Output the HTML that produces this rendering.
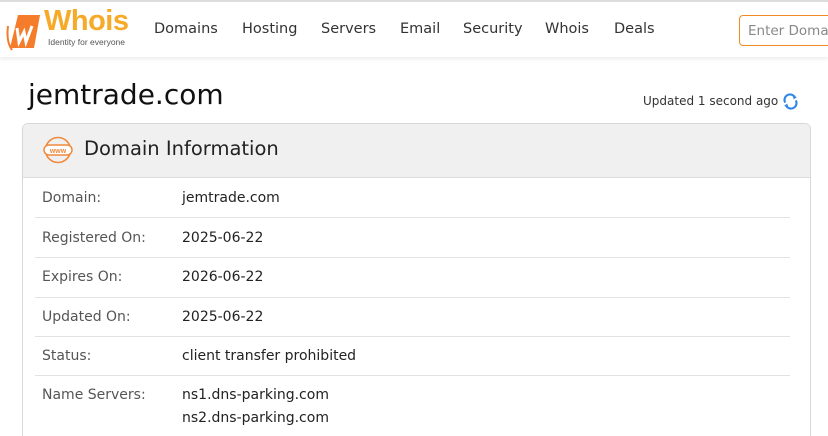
<!DOCTYPE html>
<html><head><meta charset="utf-8"><style>
*{margin:0;padding:0;box-sizing:border-box}
html,body{width:828px;height:436px;overflow:hidden}
body{background:#fff;font-family:"DejaVu Sans","Liberation Sans",sans-serif;color:#222;position:relative}
.top{position:absolute;left:0;top:0;width:828px;height:2px;background:#ddd}
.hdr{position:absolute;left:0;top:2px;width:828px;height:55px;background:#fff;box-shadow:0 2px 4px rgba(0,0,0,.08)}
.nav{position:absolute;top:19px;font-size:14.5px;color:#333}
.inp{position:absolute;left:739px;top:13px;width:100px;height:31px;border:1px solid #f08a24;border-radius:4px;font-size:13.5px;color:#888;padding:7px 8px;white-space:nowrap;overflow:hidden}
h1{position:absolute;left:28px;top:78px;font-size:28px;font-weight:normal;color:#111;font-family:"DejaVu Sans",sans-serif}
.upd{position:absolute;left:643px;top:94px;font-size:12px;color:#333}
.card{position:absolute;left:22px;top:123px;width:789px;height:330px;border:1px solid #d8d8d8;border-radius:6px;overflow:hidden;background:#fff}
.ch{height:54px;background:#f0f0f0;border-bottom:1px solid #ddd;position:relative}
.ch span{position:absolute;left:61px;top:13px;font-size:19.5px;color:#222}
.row{position:absolute;left:12px;width:755px;border-bottom:1px solid #e2e2e2;height:40px}
.l{position:absolute;left:7px;font-size:14px;color:#555}
.v{position:absolute;left:147px;font-size:14px;color:#222;line-height:23px}
</style></head><body>
<div class="top"></div>
<div class="hdr">
<svg style="position:absolute;left:6px;top:10px" width="36" height="40" viewBox="0 0 36 40"><path d="M12 3 L34 3 L28 36 L4 36 Z" fill="#f47c2a"/><path d="M2 14 Q0 30 6 38" stroke="#f47c2a" stroke-width="2" fill="none"/><path d="M11 16 L13 30 L18 20 L20 30 L26 14" stroke="#fff" stroke-width="3" fill="none"/></svg>
<div style="position:absolute;left:44px;top:3px;font-size:29px;font-weight:bold;color:#f7a928;font-family:'Liberation Sans',sans-serif;letter-spacing:-0.5px">Whois</div>
<div style="position:absolute;left:48px;top:35px;font-size:8.5px;color:#555;font-family:'Liberation Sans',sans-serif">Identity for everyone</div>
<div class="nav" style="left:154px">Domains</div>
<div class="nav" style="left:242px">Hosting</div>
<div class="nav" style="left:321px">Servers</div>
<div class="nav" style="left:400px">Email</div>
<div class="nav" style="left:463px">Security</div>
<div class="nav" style="left:545px">Whois</div>
<div class="nav" style="left:614px">Deals</div>
<div class="inp">Enter Domain</div>
</div>
<h1>jemtrade.com</h1>
<div class="upd">Updated 1 second ago</div>
<svg style="position:absolute;left:782px;top:93px" width="17" height="17" viewBox="0 0 16 16"><path d="M3 9 A5 5 0 0 1 12 4" stroke="#2f86e6" stroke-width="2" fill="none"/><path d="M13 7 A5 5 0 0 1 4 12" stroke="#2f86e6" stroke-width="2" fill="none"/><path d="M10 2 L14 4 L11 6Z" fill="#2f86e6"/><path d="M6 14 L2 12 L5 10Z" fill="#2f86e6"/></svg>
<div class="card">
<div class="ch">
<svg style="position:absolute;left:20px;top:12px" width="30" height="28" viewBox="0 0 30 28"><circle cx="15" cy="14" r="12.5" stroke="#f08a3c" stroke-width="1.6" fill="none"/><rect x="1" y="9" width="28" height="10" rx="5" fill="#fff" stroke="#f08a3c" stroke-width="1.5"/><text x="15" y="17" font-size="7" fill="#f08a3c" text-anchor="middle" font-family="Liberation Sans" font-weight="bold">www</text></svg>
<span>Domain Information</span></div>
<div class="row" style="top:54px"><div class="l" style="top:12px">Domain:</div><div class="v" style="top:9px">jemtrade.com</div></div>
<div class="row" style="top:94px"><div class="l" style="top:12px">Registered On:</div><div class="v" style="top:9px">2025-06-22</div></div>
<div class="row" style="top:134px"><div class="l" style="top:11px">Expires On:</div><div class="v" style="top:8px">2026-06-22</div></div>
<div class="row" style="top:173px"><div class="l" style="top:12px">Updated On:</div><div class="v" style="top:9px">2025-06-22</div></div>
<div class="row" style="top:212px"><div class="l" style="top:12px">Status:</div><div class="v" style="top:9px">client transfer prohibited</div></div>
<div class="row" style="top:252px;border:none;height:70px"><div class="l" style="top:11px">Name Servers:</div><div class="v" style="top:8px">ns1.dns-parking.com<br>ns2.dns-parking.com</div></div>
</div>
</body></html>
